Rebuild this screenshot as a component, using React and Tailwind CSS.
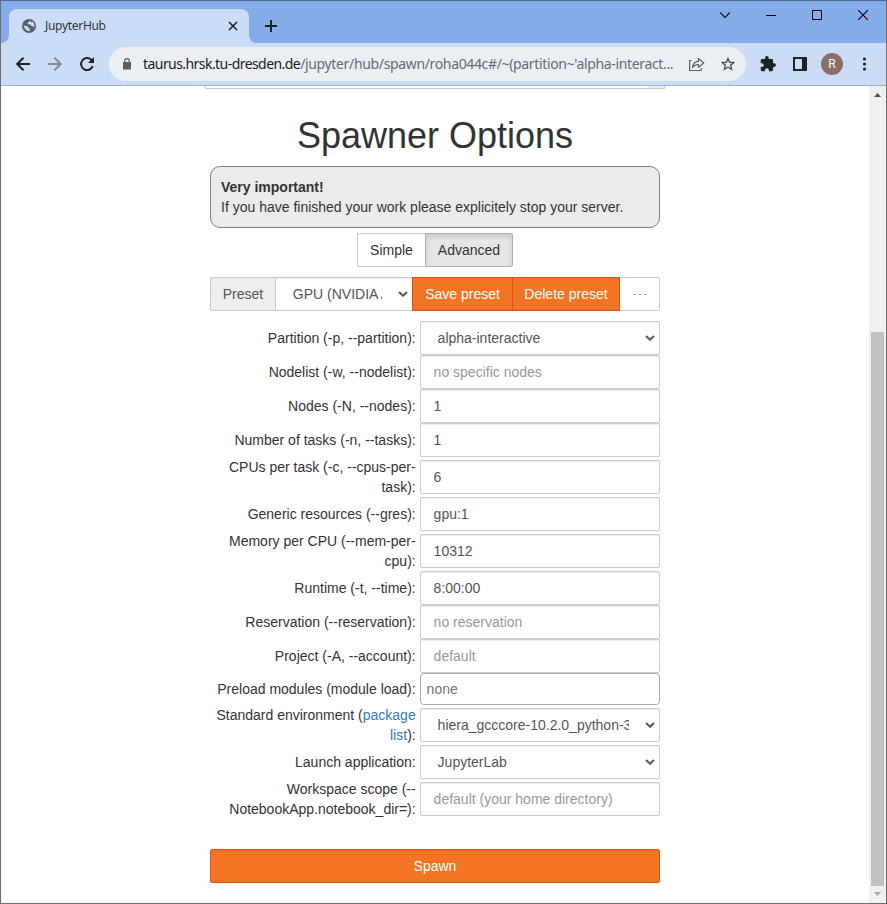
import React from "react";

const field =
  "flex h-[34px] w-[240px] items-center overflow-hidden rounded-[2px] border border-[#ccc] bg-white shadow-[inset_0_1px_1px_rgba(0,0,0,0.075)]";

function Chevron() {
  return (
    <svg className="mr-[4px] h-[6px] w-[10px] shrink-0" viewBox="0 0 10 6" fill="none">
      <path d="M1 0.9 L5 4.7 L9 0.9" stroke="#555" strokeWidth="2" />
    </svg>
  );
}

function TextField({ value, hint }) {
  return (
    <div className={field}>
      <span className={hint ? "pl-[12.6px] text-[#999]" : "pl-[12.6px] text-[#555]"}>{value}</span>
    </div>
  );
}

function SelectField({ value }) {
  return (
    <div className={field}>
      <div className="ml-4 w-[192px] shrink-0 overflow-hidden pl-[0.6px] whitespace-nowrap text-[#555]">{value}</div>
      <div className="flex flex-1 justify-end"><Chevron /></div>
    </div>
  );
}

function Row({ label, second, children }) {
  return (
    <div className={second ? "flex h-10 items-center justify-between" : "flex items-center justify-between"}>
      <div className="w-[205.7px] text-right whitespace-nowrap">
        <div>{label}</div>
        {second && <div>{second}</div>}
      </div>
      {children}
    </div>
  );
}

function TabStrip() {
  return (
    <div className="flex h-[42px] shrink-0 bg-[#85abe9]">
      <div className="flex w-2 items-end bg-[#cbdcf6]">
        <div className="h-full w-full rounded-br-[8px] bg-[#85abe9]" />
      </div>
      <div className="mt-2 flex w-[240px] items-center rounded-t-[8px] bg-[#cbdcf6] pr-[11px] pl-[13px]">
        <svg className="h-[14px] w-[14px]" viewBox="0 0 14 14">
          <circle cx="7" cy="7" r="7" fill="#5a6068" />
          <path d="M1.6 6.6 L4.5 7 Q6.7 7.3 6.3 9 L8 9.6 L7.4 12.2 Q3 12 1.6 6.6Z M8.2 1.7 Q7 2 6.8 3.2 L5.5 4 L6 5.6 L8.3 5.2 L9 6.8 L12.2 8 Q13 4 10.2 2.5 L9.6 3.7Z" fill="#cbdcf6" />
        </svg>
        <span className="ml-[9px] flex-1 font-['Noto_Sans',sans-serif] text-[12px] tracking-[-0.3px] text-[#31363f]">JupyterHub</span>
        <svg className="h-[10px] w-[10px]" viewBox="0 0 10 10"><path d="M1 1l8 8M9 1L1 9" stroke="#202124" strokeWidth="1.6" /></svg>
      </div>
      <div className="flex w-2 bg-[#cbdcf6]">
        <div className="h-full w-full rounded-bl-[8px] bg-[#85abe9]" />
      </div>
      <svg className="mt-[19px] ml-2 h-3 w-3" viewBox="0 0 12 12"><path d="M6 0v12M0 6h12" stroke="#202124" strokeWidth="2" /></svg>
      <div className="mt-[9px] ml-auto flex h-[10px] gap-9 pr-[18px]">
        <svg className="h-[10px] w-[10px]" viewBox="0 0 10 10" fill="none"><path d="M0 2.5l5 5 5-5" stroke="#111" strokeWidth="1.2" /></svg>
        <svg className="h-[10px] w-[10px]" viewBox="0 0 10 10"><path d="M0 5.5h10" stroke="#000" /></svg>
        <svg className="h-[10px] w-[10px]" viewBox="0 0 10 10" fill="none"><path d="M.5.5h9v9h-9z" stroke="#000" /></svg>
        <svg className="h-[10px] w-[10px]" viewBox="0 0 10 10"><path d="M0 0l10 10M10 0L0 10" stroke="#000" strokeWidth="1.1" /></svg>
      </div>
    </div>
  );
}

function Toolbar() {
  return (
    <div className="flex h-[43px] shrink-0 items-center border-b border-[#a4afc6] bg-[#cbdcf6] pr-[14px] pl-[15px]">
      <svg className="h-[14px] w-[14px]" viewBox="0 0 14 14" fill="none"><path d="M14 7H1.5M7.5.7L1.2 7l6.3 6.3" stroke="#202124" strokeWidth="2" /></svg>
      <svg className="ml-[18px] h-[14px] w-[14px]" viewBox="0 0 14 14" fill="none"><path d="M0 7h12.5M6.5.7L12.8 7l-6.3 6.3" stroke="#828a99" strokeWidth="2" /></svg>
      <svg className="ml-[17px] h-[16px] w-[16px]" viewBox="0 0 16 16" fill="none"><path d="M13.7 10.2A6 6 0 1 1 12.3 3.8L13.8 5.3" stroke="#202124" strokeWidth="2" /><path d="M15 1v6H9z" fill="#202124" /></svg>
      <div className="ml-[14px] flex h-[34px] w-[637px] items-center rounded-full bg-[#ebeff4] pr-[11px] pl-[14px]">
        <svg className="h-[12px] w-[8px]" viewBox="0 0 8 12"><path d="M0 4h8v7.5H0z" fill="#5a5e64" /><path d="M1.7 4.5V3a2.3 2.3 0 0 1 4.6 0v1.5" fill="none" stroke="#5a5e64" strokeWidth="1.2" /></svg>
        <div className="ml-[12px] font-['Noto_Sans',sans-serif] text-[14px] leading-5 tracking-[-0.35px] whitespace-nowrap text-[#656b73]">
          <span className="tracking-[-0.56px] text-[#202124]">taurus.hrsk.tu-dresden.de</span>/jupyter/hub/spawn/roha044c#/~(partition~'alpha-interact...
        </div>
        <svg className="ml-auto h-[15px] w-[16px] shrink-0" viewBox="0 0 16 15" fill="none" stroke="#5f6368" strokeWidth="1.2"><path d="M2.5 3.5H.6v10h11.5V11" /><path d="M3.5 10.5C4 6.5 6 4.6 9.5 4.4V1.5L14.8 6l-5.3 4.3V7.5C6.8 7.4 5 8.4 3.5 10.5Z" strokeLinejoin="round" /></svg>
        <svg className="ml-[16px] h-[14px] w-[14px] shrink-0" viewBox="0 0 14 14" fill="none" stroke="#50555b" strokeWidth="1.4"><path d="M7 1.5l1.6 3.8 4.1.3-3.1 2.7 1 4L7 10.2l-3.6 2.1 1-4L1.3 5.6l4.1-.3z" /></svg>
      </div>
      <svg className="ml-[14px] h-[16px] w-[16px]" viewBox="0 0 22 22" fill="#202124"><path d="M19.5 10H18V6a2 2 0 0 0-2-2h-4V2.5a2.5 2.5 0 0 0-5 0V4H3a2 2 0 0 0-2 2v3.8h1.5a2.7 2.7 0 0 1 0 5.4H1V19a2 2 0 0 0 2 2h3.8v-1.5a2.7 2.7 0 0 1 5.4 0V21H16a2 2 0 0 0 2-2v-4h1.5a2.5 2.5 0 0 0 0-5z" /></svg>
      <svg className="ml-[17px] h-[14px] w-[14px]" viewBox="0 0 14 14"><path d="M0 0h14v14H0zM2 2v10h7V2z" fill="#202124" fillRule="evenodd" /></svg>
      <div className="ml-[14px] flex h-[22px] w-[22px] items-center justify-center rounded-full bg-[#8d6e63] font-[Roboto,sans-serif] text-[12px] text-white">R</div>
      <svg className="ml-auto h-[14px] w-[16px]" viewBox="0 0 16 14" fill="#202124"><circle cx="8.5" cy="2" r="1.6" /><circle cx="8.5" cy="7" r="1.6" /><circle cx="8.5" cy="12" r="1.6" /></svg>
    </div>
  );
}

export default function App() {
  return (
    <div className="flex h-[904px] w-[887px] flex-col overflow-hidden border border-[#6d6e70] border-t-[#536884] bg-white font-['Liberation_Sans',Arial,sans-serif] text-[14px] leading-5 text-[#333]">
      <TabStrip />
      <Toolbar />
      <div className="flex min-h-0 flex-1">
        <main className="flex flex-1 flex-col items-center">
          <div className="flex h-[3px] w-[460px] justify-end border border-t-0 border-[#ccc]"><div className="w-[17px] bg-[#eee]" /></div>
          <h1 className="mt-[27px] text-[36px] leading-10">Spawner Options</h1>
          <div className="mt-[10px] h-[62px] w-[450px] rounded-[10px] border border-[#808080] bg-[#ebebeb] p-[10px]">
            <b>Very important!</b>
            <p>If you have finished your work please explicitely stop your server.</p>
          </div>
          <div className="mt-[5px] flex h-[34px] w-[156px]">
            <div className="flex w-[68px] items-center justify-center rounded-l-[2px] border border-r-0 border-[#ccc]">Simple</div>
            <div className="flex flex-1 items-center justify-center rounded-r-[2px] border border-[#adadad] bg-[#e6e6e6] shadow-[inset_0_3px_5px_rgba(0,0,0,0.125)]">Advanced</div>
          </div>
          <div className="mt-[10px] flex h-[34px] w-[450px]">
            <div className="flex w-[65px] items-center justify-center rounded-l-[2px] border border-r-0 border-[#ccc] bg-[#eee] text-[#555]">Preset</div>
            <div className="flex w-[137px] items-center border border-r-0 border-[#ccc] text-[#555] shadow-[inset_0_1px_1px_rgba(0,0,0,0.075)]">
              <div className="ml-4 w-[90px] overflow-hidden pl-[0.8px] whitespace-nowrap">GPU (NVIDIA A100)</div>
              <div className="flex flex-1 justify-end"><Chevron /></div>
            </div>
            <div className="flex w-[100px] items-center justify-center border border-r-0 border-[#e34f21] bg-[#f37423] text-white">Save preset</div>
            <div className="flex w-[108px] items-center justify-center border border-[#e34f21] bg-[#f37423] text-white">Delete preset</div>
            <div className="flex flex-1 items-center justify-center gap-[3px] rounded-r-[2px] border border-l-0 border-[#ccc]">
              <i className="h-px w-[2px] bg-[#888]" /><i className="h-px w-[2px] bg-[#888]" /><i className="h-px w-[2px] bg-[#888]" />
            </div>
          </div>
          <div className="mt-[10px] flex w-[450px] flex-col">
            <Row label="Partition (-p, --partition):"><SelectField value="alpha-interactive" /></Row>
            <Row label="Nodelist (-w, --nodelist):"><TextField value="no specific nodes" hint /></Row>
            <Row label="Nodes (-N, --nodes):"><TextField value="1" /></Row>
            <Row label="Number of tasks (-n, --tasks):"><TextField value="1" /></Row>
            <Row label="CPUs per task (-c, --cpus-per-" second="task):"><TextField value="6" /></Row>
            <Row label="Generic resources (--gres):"><TextField value="gpu:1" /></Row>
            <Row label="Memory per CPU (--mem-per-" second="cpu):"><TextField value="10312" /></Row>
            <Row label="Runtime (-t, --time):"><TextField value="8:00:00" /></Row>
            <Row label="Reservation (--reservation):"><TextField value="no reservation" hint /></Row>
            <Row label="Project (-A, --account):"><TextField value="default" hint /></Row>
            <Row label="Preload modules (module load):">
              <div className="flex h-8 w-[240px] items-center rounded-[4px] border border-[#aaa] pl-[5.6px] text-[#757575]">none</div>
            </Row>
            <Row
              label={<>Standard environment (<span className="text-[#337ab7]">package</span></>}
              second={<><span className="text-[#337ab7]">list</span>):</>}
            >
              <SelectField value="hiera_gcccore-10.2.0_python-3.8.6" />
            </Row>
            <Row label="Launch application:"><SelectField value="JupyterLab" /></Row>
            <Row label="Workspace scope (--" second="NotebookApp.notebook_dir=):"><TextField value="default (your home directory)" hint /></Row>
          </div>
          <button className="mt-[30px] h-[34px] w-[450px] rounded-[2px] border border-[#e34f21] bg-[#f37423] text-white">Spawn</button>
        </main>
        <div className="flex w-[17px] flex-col items-center bg-[#f0f0f0]">
          <svg className="mt-[7px] h-1 w-[7px]" viewBox="0 0 7 4"><path d="M0 4l3.5-4L7 4z" fill="#505050" /></svg>
          <div className="mt-[235px] h-[554px] w-[13px] bg-[#c1c1c1]" />
          <svg className="mt-[6px] h-1 w-[7px]" viewBox="0 0 7 4"><path d="M0 0l3.5 4L7 0z" fill="#a3a3a3" /></svg>
        </div>
      </div>
    </div>
  );
}
